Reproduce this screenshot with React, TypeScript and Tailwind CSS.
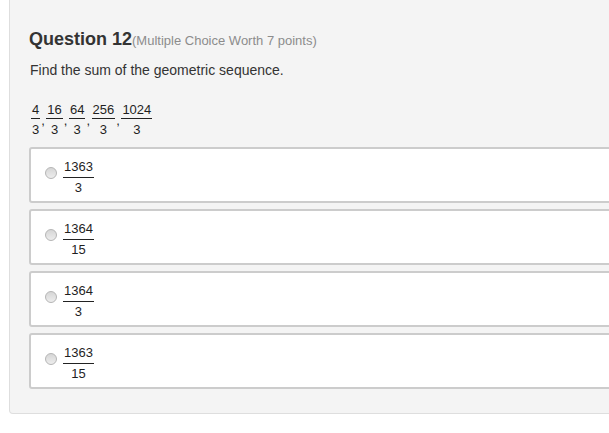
import React from "react";

const font = { fontFamily: '"Liberation Sans", Arial, Helvetica, sans-serif' };

function Frac({ n, d }: { n: string; d: string }) {
  return (
    <div className="ml-[6px] flex flex-col items-stretch text-[13px] leading-[16px] text-[#1f1f1f]">
      <span className="px-[1px] pb-[2px] text-center border-b border-[#222]">{n}</span>
      <span className="px-[1px] pt-[2px] text-center">{d}</span>
    </div>
  );
}

function SeqFrac({ n, d }: { n: string; d: string }) {
  return (
    <span className="inline-flex flex-col items-stretch text-[13px] leading-[16px] text-[#1f1f1f]">
      <span className="px-[1px] text-center border-b border-[#222]">{n}</span>
      <span className="px-[1px] pt-[3px] text-center">{d}</span>
    </span>
  );
}

function Comma() {
  return <span className="text-[13px] leading-[16px] text-[#1f1f1f] mt-[11px] ml-[1px] mr-[1.5px]">,</span>;
}

function Option({ n, d }: { n: string; d: string }) {
  return (
    <div className="h-[56px] bg-white border-2 border-[#cccccc] rounded-[3px] flex items-start pl-[14px] pt-[10px]">
      <span className="mt-[8px] w-[12px] h-[12px] rounded-full border border-[#b5b5b5] bg-gradient-to-b from-[#d6d6d6] to-[#ededed] shrink-0" />
      <Frac n={n} d={d} />
    </div>
  );
}

export default function App() {
  return (
    <div className="w-[609px] h-[433px] overflow-hidden bg-white" style={font}>
      <div className="ml-[9px] w-[660px] bg-[#f4f4f4] border-l border-r border-b border-[#dedede] rounded-b-[4px] pl-[19px] pt-[29px] pb-[24px]">
        <div className="leading-[20px] whitespace-nowrap">
          <span className="text-[18px] font-bold text-[#333333]">Question 12</span>
          <span className="text-[13px] text-[#8c8c8c]">(Multiple Choice Worth 7 points)</span>
        </div>
        <div className="mt-[9px] text-[14px] leading-[20px] text-[#333333] pl-[1px]">
          Find the sum of the geometric sequence.
        </div>
        <div className="mt-[22px] flex items-start pl-[2px]">
          <SeqFrac n="4" d="3" />
          <Comma />
          <SeqFrac n="16" d="3" />
          <Comma />
          <SeqFrac n="64" d="3" />
          <Comma />
          <SeqFrac n="256" d="3" />
          <Comma />
          <SeqFrac n="1024" d="3" />
        </div>
        <div className="mt-[9px] flex flex-col gap-[6px]">
          <Option n="1363" d="3" />
          <Option n="1364" d="15" />
          <Option n="1364" d="3" />
          <Option n="1363" d="15" />
        </div>
      </div>
    </div>
  );
}
